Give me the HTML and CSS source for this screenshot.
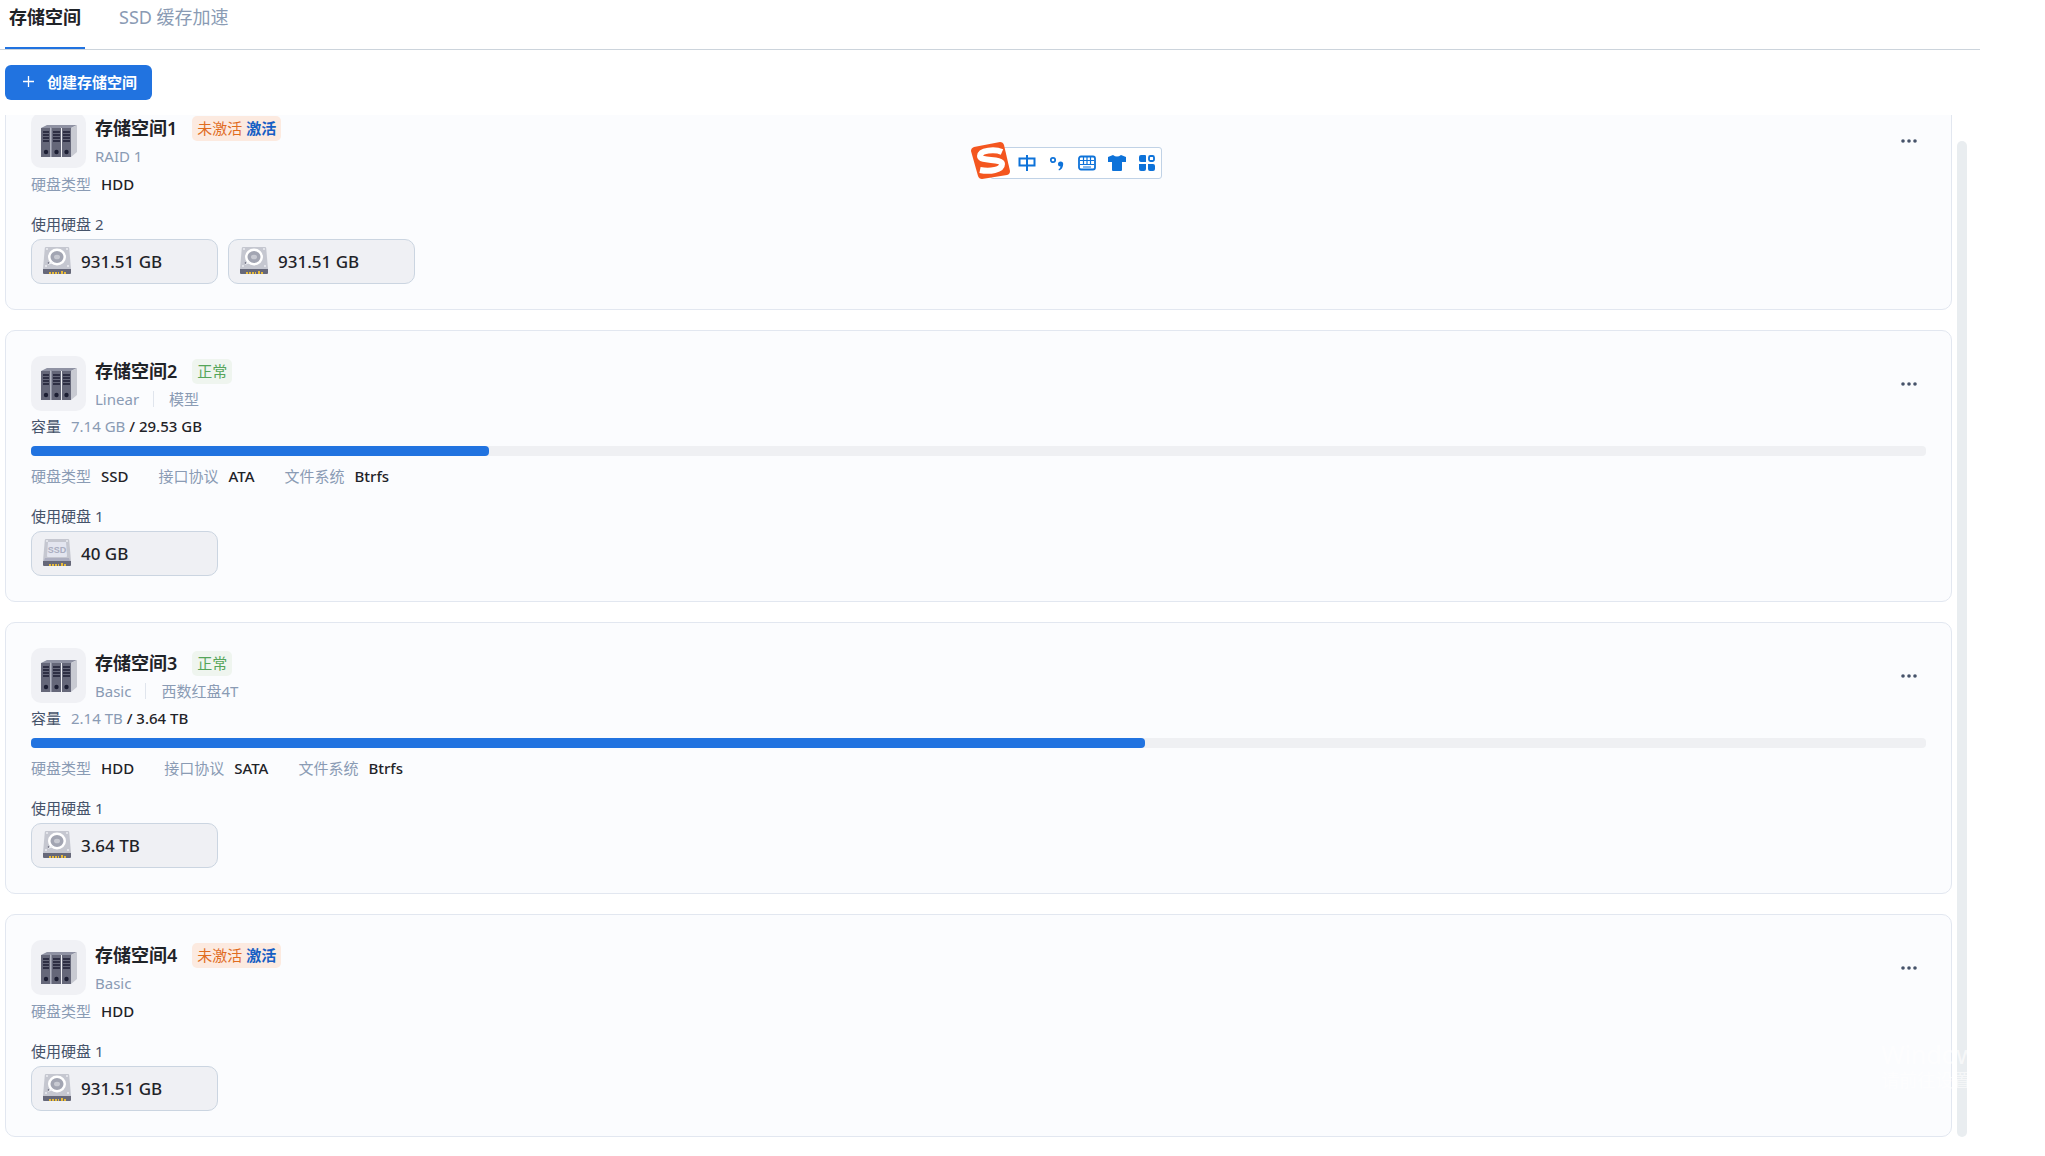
FILE: index.html
```html
<!DOCTYPE html>
<html lang="zh-CN">
<head>
    <meta charset="UTF-8">
    <meta name="viewport" content="width=device-width, initial-scale=1.0">
    <title>存储空间</title>
    <link rel="stylesheet" href="styles.css">
</head>
<body>
    <!-- Iconos compartidos -->
    <svg class="sprite" aria-hidden="true">
        <symbol id="icon-pool" viewBox="0 0 36 32">
            <path d="M0 3L6 0H16L12 3V32H0zM11 3L16 0H26L22 3zM21 3L26 0H36L30 3z" fill="#8f92a3"/>
            <path d="M30 3L36 0V27L30 32z" fill="#c8cad2"/>
            <path d="M9 3L10 2V32H9zM19 3L20 2V32H19z" fill="#b4b6c2"/>
            <path d="M0 3H9V32H0zM11 3H20V32H11zM21 3H30V32H21z" fill="#656779"/>
            <path d="M2 7H8M2 10H8M2 13H8M2 16H8M12 7H19M12 10H19M12 13H19M12 16H19M22 7H29M22 10H29M22 13H29M22 16H29" stroke="#1c1e33" stroke-width="1.4"/>
            <circle cx="5" cy="27" r="2.2" fill="#1c1e33"/>
            <circle cx="15.5" cy="27" r="2.2" fill="#1c1e33"/>
            <circle cx="25.5" cy="27" r="2.2" fill="#1c1e33"/>
        </symbol>
        <symbol id="icon-base" viewBox="0 0 28 28">
            <path d="M3 1H25Q26 1 26.2 2L28 23H0L1.8 2Q2 1 3 1z" fill="#c5c7d0"/>
            <path d="M0 23H28V27Q28 28 27 28H1Q0 28 0 27z" fill="#666879"/>
            <path d="M6 26H8V28H6zM9 26H11V28H9zM12 26H14V28H12zM15 26H16V28H15zM18 25H20V28H18zM21 26H23V28H21z" fill="#e8bb3a"/>
        </symbol>
        <symbol id="icon-hdd" viewBox="0 0 28 28">
            <use href="#icon-base"/>
            <circle cx="4" cy="3" r="0.9" fill="#f0f1f5"/>
            <circle cx="24" cy="3" r="0.9" fill="#f0f1f5"/>
            <circle cx="3" cy="20" r="0.9" fill="#f0f1f5"/>
            <circle cx="25" cy="20" r="0.9" fill="#f0f1f5"/>
            <ellipse cx="14" cy="11" rx="9" ry="8.5" fill="#fff"/>
            <ellipse cx="14" cy="11" rx="6.5" ry="6" fill="#a2a5b2"/>
            <ellipse cx="14" cy="11" rx="3" ry="2.3" fill="#c8cad2"/>
            <path d="M5 18L10 16" stroke="#f4f5f8" stroke-width="1.5"/>
            <circle cx="5.5" cy="17" r="0.8" fill="#4d4f62"/>
        </symbol>
        <symbol id="icon-ssd" viewBox="0 0 28 28">
            <use href="#icon-base"/>
            <path d="M2 20L1 23H27L26 20z" fill="#acaec0"/>
            <path d="M5 4H23L24 18Q24 19 23 19H5Q4 19 4 18z" fill="#e3e5ef"/>
            <circle cx="4" cy="3" r="0.9" fill="#f0f1f5"/>
            <circle cx="24" cy="3" r="0.9" fill="#f0f1f5"/>
            <text class="ssd-text" x="14" y="15" text-anchor="middle">SSD</text>
        </symbol>
        <symbol id="icon-more" viewBox="0 0 16 4">
            <circle cx="2" cy="2" r="1.8"/>
            <circle cx="8" cy="2" r="1.8"/>
            <circle cx="14" cy="2" r="1.8"/>
        </symbol>
    </svg>

    <div class="page">
        <nav class="tabs">
            <a class="tab active" href="#pools">存储空间</a>
            <a class="tab" href="#cache">SSD 缓存加速</a>
        </nav>

        <div class="toolbar">
            <button class="create-button" type="button">
                <svg width="11" height="11" viewBox="0 0 11 11" aria-hidden="true"><path d="M5.5 0V11M0 5.5H11" stroke="#fff" stroke-width="1.3"/></svg>
                创建存储空间
            </button>
        </div>

        <div class="scroll-area">
            <main class="pool-list" id="pools">
                <section class="card">
                    <div class="card-head">
                        <div class="pool-icon"><svg width="36" height="32"><use href="#icon-pool"/></svg></div>
                        <div class="pool-info">
                            <div class="title-row">
                                <h2>存储空间1</h2>
                                <span class="tag warning">未激活 <a href="#activate">激活</a></span>
                            </div>
                            <div class="sub-row"><span>RAID 1</span></div>
                        </div>
                        <button class="more-button" type="button" aria-label="更多"><svg width="16" height="4"><use href="#icon-more"/></svg></button>
                    </div>
                    <dl class="props">
                        <div><dt>硬盘类型</dt><dd>HDD</dd></div>
                    </dl>
                    <div class="disk-label">使用硬盘 2</div>
                    <div class="disks">
                        <div class="disk"><svg width="28" height="28"><use href="#icon-hdd"/></svg>931.51 GB</div>
                        <div class="disk"><svg width="28" height="28"><use href="#icon-hdd"/></svg>931.51 GB</div>
                    </div>
                </section>

                <section class="card">
                    <div class="card-head">
                        <div class="pool-icon"><svg width="36" height="32"><use href="#icon-pool"/></svg></div>
                        <div class="pool-info">
                            <div class="title-row">
                                <h2>存储空间2</h2>
                                <span class="tag normal">正常</span>
                            </div>
                            <div class="sub-row"><span>Linear</span><span>模型</span></div>
                        </div>
                        <button class="more-button" type="button" aria-label="更多"><svg width="16" height="4"><use href="#icon-more"/></svg></button>
                    </div>
                    <div class="capacity">容量<span class="amount"><span class="used">7.14 GB</span> / 29.53 GB</span></div>
                    <div class="bar"><div class="bar-fill" style="width: 24.18%"></div></div>
                    <dl class="props">
                        <div><dt>硬盘类型</dt><dd>SSD</dd></div>
                        <div><dt>接口协议</dt><dd>ATA</dd></div>
                        <div><dt>文件系统</dt><dd>Btrfs</dd></div>
                    </dl>
                    <div class="disk-label">使用硬盘 1</div>
                    <div class="disks">
                        <div class="disk"><svg width="28" height="28"><use href="#icon-ssd"/></svg>40 GB</div>
                    </div>
                </section>

                <section class="card">
                    <div class="card-head">
                        <div class="pool-icon"><svg width="36" height="32"><use href="#icon-pool"/></svg></div>
                        <div class="pool-info">
                            <div class="title-row">
                                <h2>存储空间3</h2>
                                <span class="tag normal">正常</span>
                            </div>
                            <div class="sub-row"><span>Basic</span><span>西数红盘4T</span></div>
                        </div>
                        <button class="more-button" type="button" aria-label="更多"><svg width="16" height="4"><use href="#icon-more"/></svg></button>
                    </div>
                    <div class="capacity">容量<span class="amount"><span class="used">2.14 TB</span> / 3.64 TB</span></div>
                    <div class="bar"><div class="bar-fill" style="width: 58.79%"></div></div>
                    <dl class="props">
                        <div><dt>硬盘类型</dt><dd>HDD</dd></div>
                        <div><dt>接口协议</dt><dd>SATA</dd></div>
                        <div><dt>文件系统</dt><dd>Btrfs</dd></div>
                    </dl>
                    <div class="disk-label">使用硬盘 1</div>
                    <div class="disks">
                        <div class="disk"><svg width="28" height="28"><use href="#icon-hdd"/></svg>3.64 TB</div>
                    </div>
                </section>

                <section class="card">
                    <div class="card-head">
                        <div class="pool-icon"><svg width="36" height="32"><use href="#icon-pool"/></svg></div>
                        <div class="pool-info">
                            <div class="title-row">
                                <h2>存储空间4</h2>
                                <span class="tag warning">未激活 <a href="#activate">激活</a></span>
                            </div>
                            <div class="sub-row"><span>Basic</span></div>
                        </div>
                        <button class="more-button" type="button" aria-label="更多"><svg width="16" height="4"><use href="#icon-more"/></svg></button>
                    </div>
                    <dl class="props">
                        <div><dt>硬盘类型</dt><dd>HDD</dd></div>
                    </dl>
                    <div class="disk-label">使用硬盘 1</div>
                    <div class="disks">
                        <div class="disk"><svg width="28" height="28"><use href="#icon-hdd"/></svg>931.51 GB</div>
                    </div>
                </section>
            </main>
            <div class="scrollbar"></div>
        </div>
    </div>

    <!-- Barra flotante del teclado -->
    <div class="ime-bar">
        <svg class="ime-logo" width="40" height="38" viewBox="0 0 40 38" aria-hidden="true">
            <path d="M3 5L29 0Q32 0 33 3L39 29Q39 32 36 33L11 37Q8 37 7 34L0 9Q0 6 3 5z" fill="#f4561f"/>
            <path d="M31 10C24 7 9 8 9 14C9 20 31 16 31 22C31 28 19 30 9 28" fill="none" stroke="#fff" stroke-width="6"/>
        </svg>
        <button type="button" aria-label="中文">
            <svg width="18" height="18" viewBox="0 0 18 18"><path d="M1.5 4.5H16.5V11.5H1.5zM9 1V17" fill="none" stroke="#0d72d9" stroke-width="2"/></svg>
        </button>
        <button type="button" aria-label="标点">
            <svg width="18" height="18" viewBox="0 0 18 18"><circle cx="5" cy="6" r="2.2" fill="none" stroke="#0d72d9" stroke-width="1.7"/><path d="M10 10A2.6 2.6 0 1 1 15.2 10Q15 15 11 16.5L10.500 15.500Q12.500 14 12.500 12.500Q10 12.500 10 10z" fill="#0d72d9"/></svg>
        </button>
        <button type="button" aria-label="键盘">
            <svg width="18" height="16" viewBox="0 0 18 16"><rect x="1" y="1.5" width="16" height="13" rx="2" fill="none" stroke="#0d72d9" stroke-width="1.8"/><path d="M2 5.5H16M2 9.5H16M5.500 2V10M9 2V10M12.500 2V10M5 12H13" stroke="#0d72d9" stroke-width="1.2"/></svg>
        </button>
        <button type="button" aria-label="皮肤">
            <svg width="18" height="18" viewBox="0 0 18 18"><path d="M5 1Q9 4 13 1L18 3V8H14V16Q14 17 13 17H5Q4 17 4 16V8H0V3z" fill="#0d72d9"/></svg>
        </button>
        <button type="button" aria-label="工具箱">
            <svg width="18" height="18" viewBox="0 0 18 18"><path d="M3 1H7Q8 1 8 2V8H3Q1 8 1 6V3Q1 1 3 1zM1 10H8V15Q8 17 6 17H3Q1 17 1 15V12zM10 10H15Q17 10 17 12V15Q17 17 15 17H12Q10 17 10 15z" fill="#0d72d9"/><rect x="11" y="2" width="5" height="5" rx="1.5" fill="none" stroke="#0d72d9" stroke-width="1.8"/></svg>
        </button>
    </div>

    <div class="system-notice">
        <p>Windows已</p>
        <small>请前往设置</small>
    </div>
</body>
</html>
```
FILE: styles.css
```css
* {
    box-sizing: border-box;
}

body {
    margin: 0;
    background-color: #fff;
    color: #1f2328;
    font-family: "Noto Sans", "Noto Sans CJK SC", sans-serif;
    font-size: 15px;
    line-height: 20px;
}

.sprite {
    display: none;
}

svg {
    display: block;
}

a {
    text-decoration: none;
}

button {
    font: inherit;
    border: none;
    cursor: pointer;
}

.page {
    padding-right: 65px;
}

.tabs {
    display: flex;
    gap: 30px;
    height: 50px;
    padding-left: 5px;
    border-bottom: 1px solid #ccd4dc;
}

.tab {
    height: 49px;
    padding: 5px 4px 0;
    color: #8a9bb4;
    font-size: 18px;
    line-height: 24px;
}

.tab.active {
    color: #1f2328;
    font-weight: bold;
    border-bottom: 2px solid #2173e0;
}

.toolbar {
    padding: 15px 5px;
}

.create-button {
    display: flex;
    align-items: center;
    gap: 13px;
    height: 35px;
    padding: 0 15px 2px 18px;
    border-radius: 6px;
    background-color: #2173e0;
    color: #fff;
    font-weight: bold;
}

.scroll-area {
    display: flex;
    gap: 5px;
    padding: 0 13px 0 5px;
    overflow: hidden;
}

.pool-list {
    flex: 1;
    display: flex;
    flex-direction: column;
    gap: 20px;
    margin-top: -28px;
}

.scrollbar {
    width: 10px;
    margin-top: 26px;
    border-radius: 5px;
    background-color: #e9edf0;
}

.card {
    padding: 25px;
    border: 1px solid #e2e7f0;
    border-radius: 10px;
    background-color: #fbfcfe;
}

.card-head {
    display: flex;
    align-items: center;
    gap: 9px;
}

.pool-icon {
    display: flex;
    align-items: center;
    justify-content: center;
    width: 55px;
    height: 55px;
    border-radius: 10px;
    background-color: #f0f1f5;
}

.pool-info {
    flex: 1;
}

.title-row {
    display: flex;
    align-items: center;
    gap: 15px;
    margin-bottom: 5px;
}

.title-row h2 {
    margin: 0;
    font-size: 18px;
    font-weight: 600;
    line-height: 25px;
}

.tag {
    padding: 0 5px;
    border-radius: 5px;
    line-height: 25px;
}

.tag.warning {
    background-color: #fceae0;
    color: #e06c1f;
}

.tag.warning a {
    color: #175fc4;
    font-weight: bold;
}

.tag.normal {
    background-color: #eff5ef;
    color: #55a55a;
}

.sub-row {
    display: flex;
    align-items: center;
    color: #8a9bb4;
}

.sub-row span + span {
    margin-left: 14px;
    padding-left: 15px;
    border-left: 1px solid #e0e5ed;
    line-height: 16px;
}

.more-button {
    padding: 10px 9px;
    background: none;
    fill: #46536a;
}

.capacity {
    display: flex;
    gap: 10px;
    margin-top: 5px;
    color: #46536a;
}

.amount {
    color: #1f2328;
    font-weight: 500;
}

.used {
    color: #8a9bb4;
    font-weight: normal;
}

.bar {
    height: 10px;
    margin-top: 10px;
    border-radius: 4px;
    background-color: #eff0f3;
}

.bar-fill {
    height: 10px;
    border-radius: 4px;
    background-color: #2173e0;
}

.props {
    display: flex;
    gap: 30px;
    margin: 10px 0 0;
}

.card-head + .props {
    margin-top: 6px;
}

.props div {
    display: flex;
    gap: 10px;
}

.props dt {
    color: #8a9bb4;
}

.props dd {
    margin: 0;
    font-weight: 500;
}

.disk-label {
    margin-top: 20px;
    color: #46536a;
}

.disks {
    display: flex;
    gap: 10px;
    margin-top: 5px;
}

.disk {
    display: flex;
    align-items: center;
    gap: 10px;
    width: 187px;
    height: 45px;
    padding: 1px 11px 0;
    border: 1px solid #cbd5e1;
    border-radius: 10px;
    background-color: #eff0f4;
    font-size: 17px;
    font-weight: 500;
}

.disk svg {
    margin-bottom: 4px;
}

.ssd-text {
    font-family: "Liberation Sans", sans-serif;
    font-size: 9px;
    font-weight: bold;
    fill: #a9adbf;
}

.ime-bar {
    position: absolute;
    top: 147px;
    left: 990px;
    display: flex;
    align-items: center;
    gap: 12px;
    height: 32px;
    padding: 0 5px 0 27px;
    border: 1px solid #c0d2e6;
    border-radius: 3px;
    background-color: #fff;
}

.ime-bar button {
    padding: 0;
    background: none;
}

.ime-logo {
    position: absolute;
    top: -6px;
    left: -20px;
}

/* aviso del sistema, casi transparente */
.system-notice {
    position: absolute;
    right: 32px;
    bottom: 64px;
    color: rgba(255, 255, 255, 0.6);
    pointer-events: none;
}

.system-notice p {
    margin: 0;
    font-size: 25px;
    line-height: 28px;
}

.system-notice small {
    font-size: 18px;
    line-height: 24px;
}
```
